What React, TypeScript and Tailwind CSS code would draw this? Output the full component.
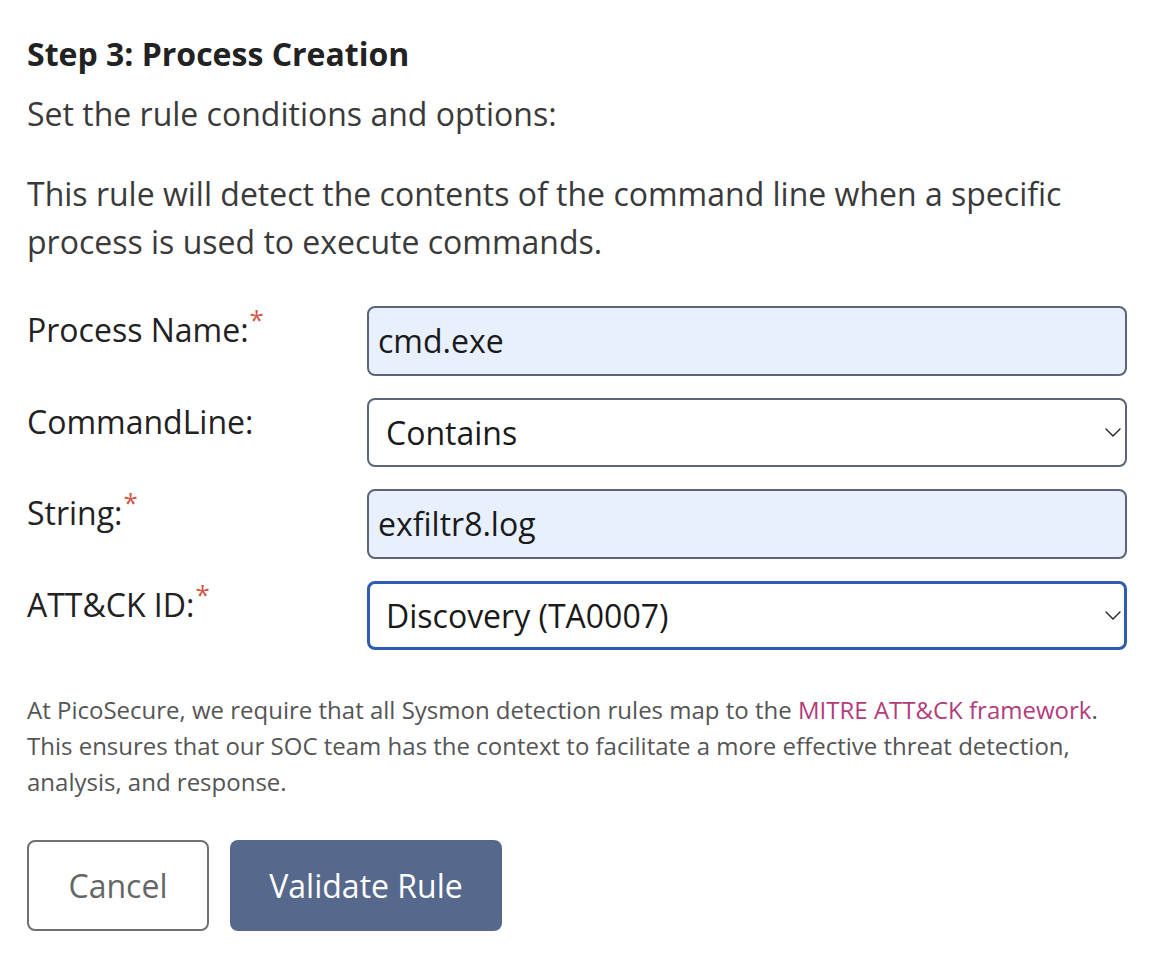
type Field = {
  label: string
  required?: boolean
  kind: 'input' | 'select'
  value: string
  focused?: boolean
}

const fields: Field[] = [
  { label: 'Process Name:', required: true, kind: 'input', value: 'cmd.exe' },
  { label: 'CommandLine:', kind: 'select', value: 'Contains' },
  { label: 'String:', required: true, kind: 'input', value: 'exfiltr8.log' },
  { label: 'ATT&CK ID:', required: true, kind: 'select', value: 'Discovery (TA0007)', focused: true },
]

function Chevron() {
  return (
    <svg width="16" height="9" viewBox="0 0 16 9" fill="none" stroke="#222" strokeWidth="1.4" strokeLinecap="round" strokeLinejoin="round">
      <polyline points="1,1 8,8 15,1" />
    </svg>
  )
}

function FieldControl({ field }: { field: Field }) {
  if (field.kind === 'input') {
    return (
      <div className="flex h-[70px] items-center rounded-lg border-2 border-[#5b6577] bg-[#e8f0fe] pl-[9px] text-[32px] text-[#1a1a1a]">
        {field.value}
      </div>
    )
  }
  return (
    <div
      className={
        field.focused
          ? 'flex h-[69px] items-center justify-between rounded-lg border-[3px] border-[#2d5cb0] bg-white pl-[16px] pr-[3px] text-[32px] text-[#1a1a1a]'
          : 'flex h-[69px] items-center justify-between rounded-lg border-2 border-[#5b6577] bg-white pl-[17px] pr-[4px] text-[32px] text-[#1a1a1a]'
      }
    >
      <span>{field.value}</span>
      <Chevron />
    </div>
  )
}

export default function App() {
  return (
    <div
      className="min-h-screen bg-white px-[27px] pt-[34px] text-[#333]"
      style={{ fontFamily: '"Open Sans", "Noto Sans", sans-serif' }}
    >
      <h2 className="text-[32px] font-bold leading-[40px] text-[#222]">Step 3: Process Creation</h2>
      <p className="mt-[20px] text-[32px] leading-[40px] text-[#3a3a3a]">Set the rule conditions and options:</p>
      <p className="mt-[36px] w-[1090px] text-[32px] leading-[48px] text-[#3a3a3a]">
        This rule will detect the contents of the command line when a specific process is used to execute commands.
      </p>

      <div className="mt-[40px] flex w-[1100px] flex-col gap-[22px]">
        {fields.map((f) => (
          <div key={f.label} className="grid grid-cols-[340px_1fr] items-start">
            <label className="pt-[4px] text-[32px] leading-[40px] text-[#222]">
              {f.label}
              {f.required && <sup className="ml-[1px] text-[26px] text-[#d0574a]">*</sup>}
            </label>
            <FieldControl field={f} />
          </div>
        ))}
      </div>

      <p className="mt-[42px] w-[1090px] text-[24px] leading-[36px] text-[#555]">
        At PicoSecure, we require that all Sysmon detection rules map to the{' '}
        <a href="#" className="text-[#b23c7c]">MITRE ATT&amp;CK framework</a>. This ensures that our SOC team has the
        context to facilitate a more effective threat detection, analysis, and response.
      </p>

      <div className="mt-[40px] flex gap-[21px]">
        <button className="h-[91px] w-[182px] rounded-lg border-2 border-[#707070] bg-white text-[32px] text-[#666]">
          Cancel
        </button>
        <button className="h-[91px] w-[272px] rounded-lg bg-[#56688c] text-[32px] text-white">Validate Rule</button>
      </div>
    </div>
  )
}
